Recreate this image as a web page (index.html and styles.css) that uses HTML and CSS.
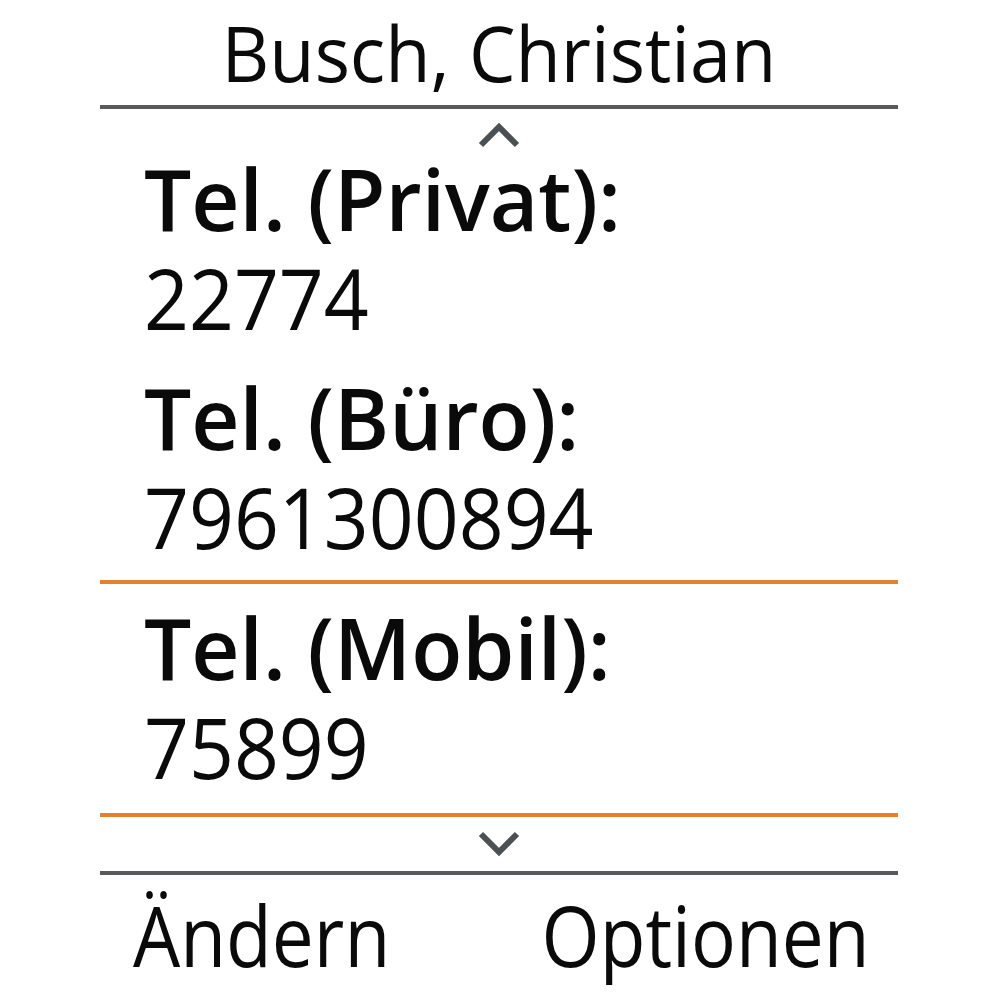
FILE: index.html
```html
<!DOCTYPE html>
<html>
<head>
    <title>Busch, Christian</title>
    <link rel="stylesheet" href="styles.css">
</head>
<body>
    <div class="screen">
        <div class="title"><span class="narrow">Busch, Christian</span></div>

        <div class="scroll scroll-up">
            <svg class="chevron" width="44" height="26" viewBox="0 0 44 26">
                <polyline points="4,23 22,5 40,23" />
            </svg>
        </div>

        <div class="entries">
            <div class="entry">
                <div class="entry-label"><span class="narrow">Tel. (Privat):</span></div>
                <div class="entry-value"><span class="narrow">22774</span></div>
            </div>
            <div class="entry">
                <div class="entry-label"><span class="narrow">Tel. (Büro):</span></div>
                <div class="entry-value"><span class="narrow">7961300894</span></div>
            </div>
            <div class="entry selected">
                <div class="entry-label"><span class="narrow">Tel. (Mobil):</span></div>
                <div class="entry-value"><span class="narrow">75899</span></div>
            </div>
        </div>

        <div class="scroll scroll-down">
            <svg class="chevron" width="44" height="26" viewBox="0 0 44 26">
                <polyline points="4,4 22,22 40,4" />
            </svg>
        </div>

        <div class="softkeys">
            <span class="softkey narrow">Ändern</span>
            <span class="softkey softkey-right narrow">Optionen</span>
        </div>
    </div>
</body>
</html>
```

FILE: styles.css
```css
body {
    margin: 0;
    background: #ffffff;
    color: #0a0a0a;
    font-family: "Open Sans", "Noto Sans", sans-serif;
}
.screen {
    width: 798px;
    margin: 0 auto 0 100px;
}
/* the device font is a bit narrower than Open Sans */
.narrow {
    display: inline-block;
    transform-origin: left center;
}
.title {
    font-size: 77px;
    line-height: 105px;
    text-align: center;
    border-bottom: 4px solid #5a5a5c;
}
.title .narrow {
    transform: scaleX(0.96);
    transform-origin: center;
}
.scroll {
    display: flex;
    justify-content: center;
}
.scroll-up {
    height: 40px;
}
.scroll-up .chevron {
    margin-top: 13px;
}
.scroll-down {
    height: 54px;
    border-bottom: 4px solid #5a5a5c;
}
.scroll-down .chevron {
    margin-top: 13px;
}
.chevron polyline {
    fill: none;
    stroke: #4b5053;
    stroke-width: 6;
}
.entries {
    display: flex;
    flex-direction: column;
    gap: 21px;
}
.entry {
    padding-left: 44px;
    font-size: 85px;
    line-height: 99px;
}
.entry-label {
    font-weight: 600;
}
.entry-label .narrow {
    transform: scaleX(0.985);
}
.entry-value .narrow {
    transform: scaleX(0.925);
}
.entry.selected {
    margin-top: -7px;
    padding-top: 14px;
    padding-bottom: 17px;
    border-top: 4px solid #e5802f;
    border-bottom: 4px solid #e5802f;
}
.softkeys {
    display: flex;
    justify-content: space-between;
    padding: 10px 28px 0 33px;
    font-size: 84px;
    line-height: 100px;
}
.softkey {
    transform: scaleX(0.89);
}
.softkey-right {
    transform-origin: right center;
}
```
